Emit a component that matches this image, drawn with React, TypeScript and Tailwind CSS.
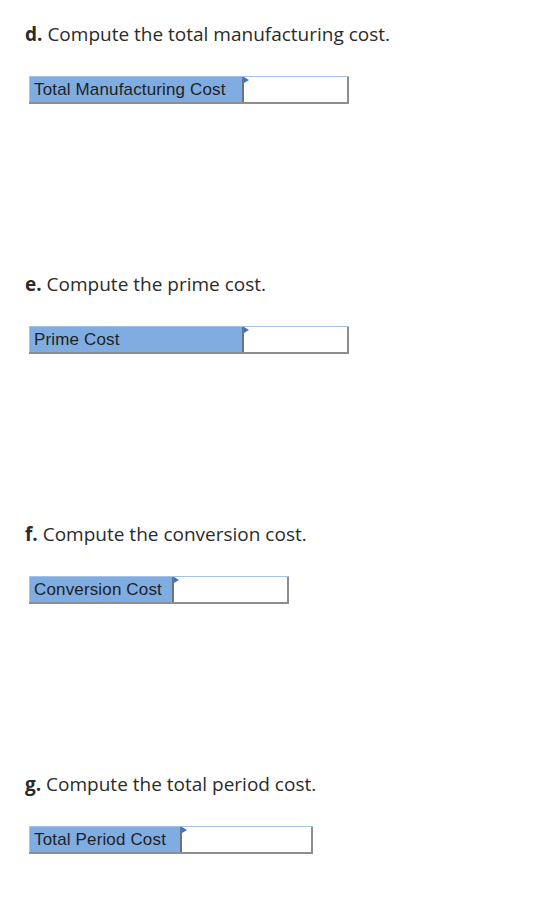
const sections = [
  { letter: "d.", text: "Compute the total manufacturing cost.", label: "Total Manufacturing Cost", labelW: "w-[215px]", inputW: "w-[105px]" },
  { letter: "e.", text: "Compute the prime cost.", label: "Prime Cost", labelW: "w-[215px]", inputW: "w-[105px]" },
  { letter: "f.", text: "Compute the conversion cost.", label: "Conversion Cost", labelW: "w-[145px]", inputW: "w-[115px]" },
  { letter: "g.", text: "Compute the total period cost.", label: "Total Period Cost", labelW: "w-[153px]", inputW: "w-[131px]" },
];

const AnswerRow = ({ label, labelW, inputW }: { label: string; labelW: string; inputW: string }) => {
  return (
    <div className="ml-[4px] flex w-fit h-[28px] border-t border-t-[#a3c1e9] border-b-2 border-b-[#8d8d8d]">
      <div
        className={`${labelW} flex items-center bg-[#7fade2] border-l border-l-[#a9c6ec] border-r-2 border-r-[#6f7378] pl-[4px] text-[17px] tracking-[0.15px] text-[#1f1f1f]`}
        style={{ fontFamily: '"Liberation Sans", Arial, sans-serif' }}
      >
        {label}
      </div>
      <div className={`${inputW} relative bg-white border-r-2 border-r-[#8d8d8d]`}>
        <span className="absolute left-0 top-0 h-0 w-0 border-y-[3px] border-y-transparent border-l-[5px] border-l-[#3d74c6]" />
      </div>
    </div>
  );
};

export default function App() {
  return (
    <div className="min-h-[902px] w-[560px] bg-white pl-[25px] pt-[22px]" style={{ fontFamily: "'Open Sans', Lato, sans-serif" }}>
      {sections.map((s, i) => (
        <div key={s.letter} className={i === 0 ? "" : "mt-[168px]"}>
          <p className="text-[19px] leading-[24px] text-[#2b2b2b]">
            <span className="font-bold">{s.letter}</span> {s.text}
          </p>
          <div className="mt-[30px]">
            <AnswerRow label={s.label} labelW={s.labelW} inputW={s.inputW} />
          </div>
        </div>
      ))}
    </div>
  );
}
